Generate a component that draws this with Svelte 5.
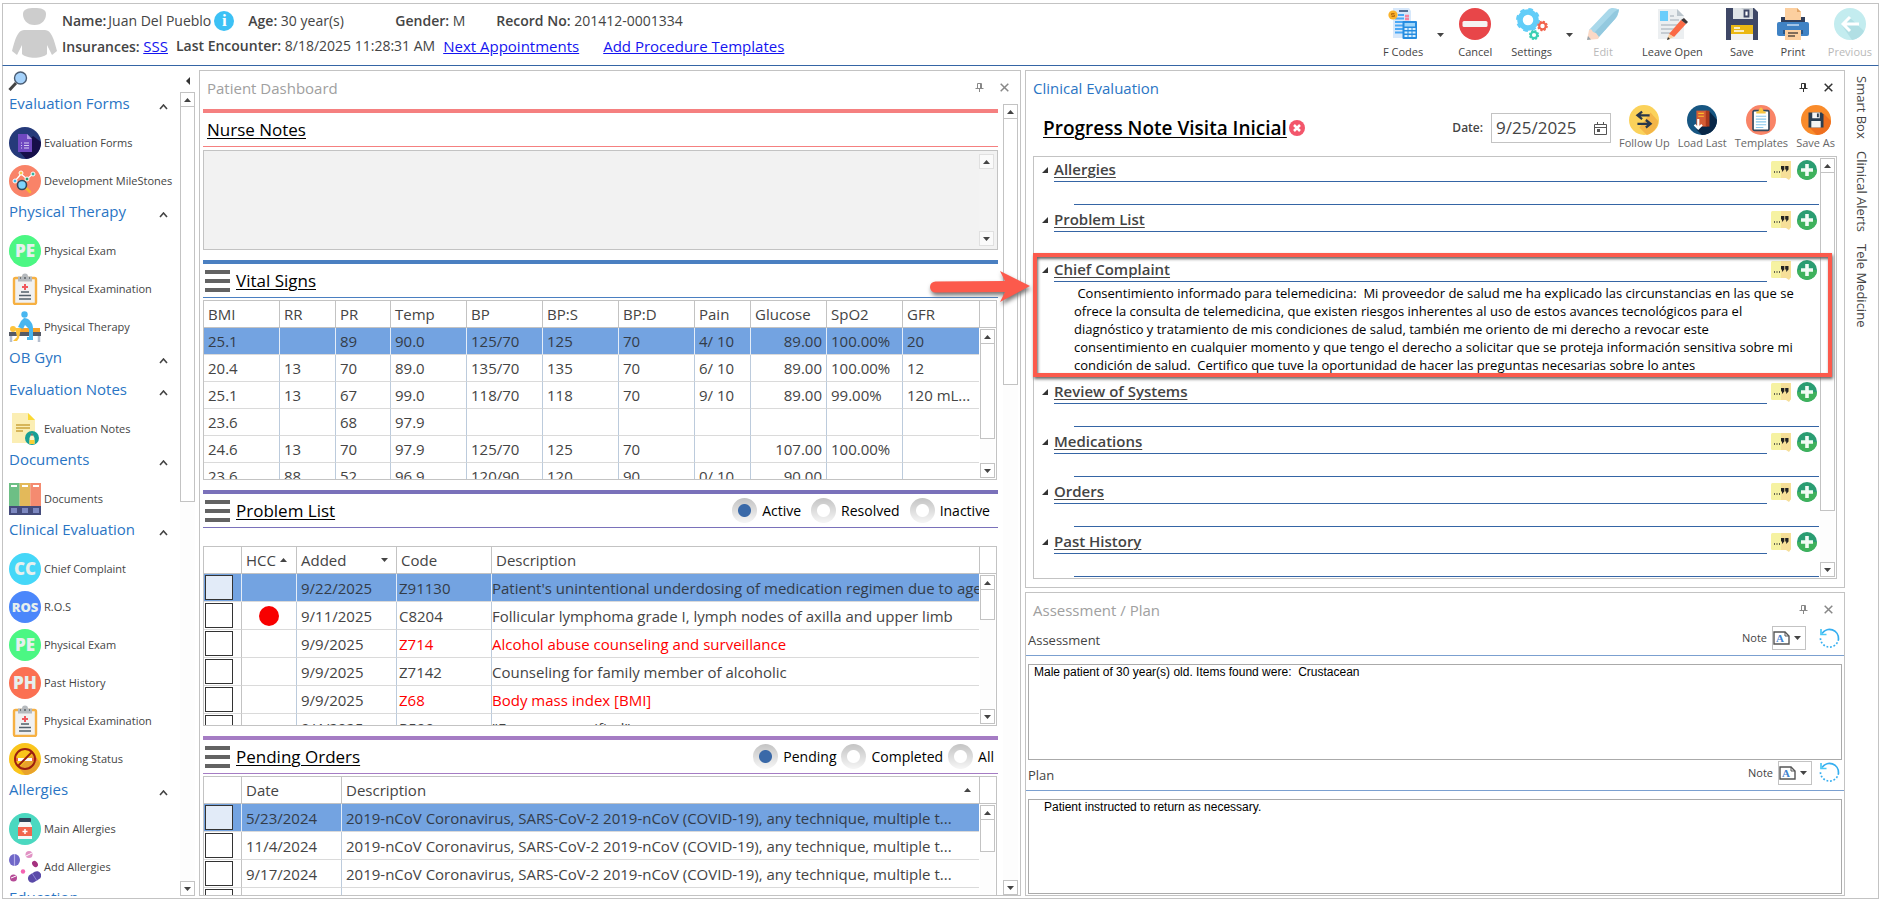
<script lang="ts">
	type Column = { label: string; width?: number; sort?: 'asc' | 'desc'; align?: 'right' };

	const groups = [
		{
			title: 'Evaluation Forms',
			items: [
				{ label: 'Evaluation Forms', icon: 'form' },
				{ label: 'Development MileStones', icon: 'milestones' }
			]
		},
		{
			title: 'Physical Therapy',
			items: [
				{ label: 'Physical Exam', icon: 'badge', text: 'PE', color: '#4bf783' },
				{ label: 'Physical Examination', icon: 'clipboard' },
				{ label: 'Physical Therapy', icon: 'therapy' }
			]
		},
		{ title: 'OB Gyn', items: [] },
		{ title: 'Evaluation Notes', items: [{ label: 'Evaluation Notes', icon: 'notes' }] },
		{ title: 'Documents', items: [{ label: 'Documents', icon: 'binders' }] },
		{
			title: 'Clinical Evaluation',
			items: [
				{ label: 'Chief Complaint', icon: 'badge', text: 'CC', color: '#45d7f8' },
				{ label: 'R.O.S', icon: 'badge', text: 'ROS', color: '#4b87fb' },
				{ label: 'Physical Exam', icon: 'badge', text: 'PE', color: '#4bf783' },
				{ label: 'Past History', icon: 'badge', text: 'PH', color: '#fb7052' },
				{ label: 'Physical Examination', icon: 'clipboard' },
				{ label: 'Smoking Status', icon: 'smoking' }
			]
		},
		{
			title: 'Allergies',
			items: [
				{ label: 'Main Allergies', icon: 'bottle' },
				{ label: 'Add Allergies', icon: 'pills' }
			]
		},
		{ title: 'Education', items: [] }
	];

	const toolbar = [
		{ label: 'F Codes', icon: 'fcodes', menu: true },
		{ label: 'Cancel', icon: 'cancel' },
		{ label: 'Settings', icon: 'settings', menu: true },
		{ label: 'Edit', icon: 'edit', disabled: true },
		{ label: 'Leave Open', icon: 'leave', wide: true },
		{ label: 'Save', icon: 'save' },
		{ label: 'Print', icon: 'print' },
		{ label: 'Previous', icon: 'previous', disabled: true }
	];

	const vitalColumns: Column[] = [
		{ label: 'BMI', width: 76 },
		{ label: 'RR', width: 56 },
		{ label: 'PR', width: 55 },
		{ label: 'Temp', width: 76 },
		{ label: 'BP', width: 76 },
		{ label: 'BP:S', width: 76 },
		{ label: 'BP:D', width: 76 },
		{ label: 'Pain', width: 56 },
		{ label: 'Glucose', width: 76, align: 'right' },
		{ label: 'SpO2', width: 76 },
		{ label: 'GFR' }
	];

	const vitals = [
		['25.1', '', '89', '90.0', '125/70', '125', '70', '4/ 10', '89.00', '100.00%', '20'],
		['20.4', '13', '70', '89.0', '135/70', '135', '70', '6/ 10', '89.00', '100.00%', '12'],
		['25.1', '13', '67', '99.0', '118/70', '118', '70', '9/ 10', '89.00', '99.00%', '120 mL...'],
		['23.6', '', '68', '97.9', '', '', '', '', '', '', ''],
		['24.6', '13', '70', '97.9', '125/70', '125', '70', '', '107.00', '100.00%', ''],
		['23.6', '88', '52', '96.9', '120/90', '120', '90', '0/ 10', '90.00', '', '']
	];

	const problems = [
		{ added: '9/22/2025', code: 'Z91130', text: "Patient's unintentional underdosing of medication regimen due to age-related debility" },
		{ added: '9/11/2025', code: 'C8204', text: 'Follicular lymphoma grade I, lymph nodes of axilla and upper limb', hcc: true },
		{ added: '9/9/2025', code: 'Z714', text: 'Alcohol abuse counseling and surveillance', alert: true },
		{ added: '9/9/2025', code: 'Z7142', text: 'Counseling for family member of alcoholic' },
		{ added: '9/9/2025', code: 'Z68', text: 'Body mass index [BMI]', alert: true },
		{ added: '9/4/2025', code: 'R509', text: '"Fever, unspecified"' }
	];

	const covidTest = '2019-nCoV Coronavirus, SARS-CoV-2 2019-nCoV (COVID-19), any technique, multiple t...';
	const orders = [
		{ date: '5/23/2024', text: covidTest },
		{ date: '11/4/2024', text: covidTest },
		{ date: '9/17/2024', text: covidTest },
		{ date: '', text: '' }
	];

	const complaint = [
		' Consentimiento informado para telemedicina:  Mi proveedor de salud me ha explicado las circunstancias en las que se',
		'ofrece la consulta de telemedicina, que existen riesgos inherentes al uso de estos avances tecnológicos para el',
		'diagnóstico y tratamiento de mis condiciones de salud, también me oriento de mi derecho a revocar este',
		'consentimiento en cualquier momento y que tengo el derecho a solicitar que se proteja información sensitiva sobre mi',
		'condición de salud.  Certifico que tuve la oportunidad de hacer las preguntas necesarias sobre lo antes'
	].join('\n');

	const sections = [
		{ title: 'Allergies' },
		{ title: 'Problem List' },
		{ title: 'Chief Complaint', body: complaint, highlight: true },
		{ title: 'Review of Systems' },
		{ title: 'Medications' },
		{ title: 'Orders' },
		{ title: 'Past History' }
	];

	const noteTools = [
		{ label: 'Follow Up', icon: 'followup' },
		{ label: 'Load Last', icon: 'loadlast' },
		{ label: 'Templates', icon: 'templates' },
		{ label: 'Save As', icon: 'saveas' }
	];

	let problemFilter = $state('Active');
	let orderFilter = $state('Pending');
	let visitDate = $state('9/25/2025');
	let assessment = $state('Male patient of 30 year(s) old. Items found were:  Crustacean');
	let plan = $state('   Patient instructed to return as necessary.');
	let nurseNotes = $state('');
</script>

{#snippet icon(name: string, text = '', color = '')}
	<svg class="icon" viewBox="0 0 32 32" aria-hidden="true">
		{#if name === 'badge'}
			<circle cx="16" cy="16" r="16" fill={color} />
			<text class="badge-text" x="16" y={text.length > 2 ? 21 : 22} font-size={text.length > 2 ? 13 : 17}>{text}</text>
		{:else if name === 'form'}
			<circle cx="16" cy="16" r="16" fill="#253a7a" />
			<path d="M10 24 17 32C26 31 32 24 32 15L24 9Z" fill="#160f4a" />
			<path d="M9 7h9l5 5v13H9z" fill="#6f48c0" />
			<path d="M18 7v5h5z" fill="#b59ae6" />
			<path d="M12 16h1m2 0h5m-8 2.500h1m2 0h5m-8 2.500h1m2 0h5" stroke="#d9cdf3" stroke-width="1.200" />
		{:else if name === 'milestones'}
			<circle cx="16" cy="16" r="16" fill="#f98368" />
			<path d="m6 16 6-7 6 5 6-5" fill="none" stroke="#fff" stroke-width="1.300" />
			<circle cx="6" cy="16" r="2" fill="#3fb8e8" stroke="#fff" />
			<circle cx="12" cy="8" r="2" fill="#f7c948" stroke="#fff" />
			<circle cx="18" cy="14" r="2" fill="#2a9d6f" stroke="#fff" />
			<circle cx="24" cy="9" r="2" fill="#36b3a0" stroke="#fff" />
			<path d="m17 23 4 4" stroke="#f7b733" stroke-width="2.600" stroke-linecap="round" />
			<circle cx="13" cy="20" r="4.500" fill="#7ed3fb" stroke="#2f4a5e" stroke-width="1.600" />
		{:else if name === 'clipboard'}
			<rect x="5" y="5" width="22" height="26" rx="1.500" fill="#f1f1f1" stroke="#f6b042" stroke-width="2.400" />
			<path d="M9 3.500h4a3 3 0 0 1 6 0h4v5H9z" fill="#b6babe" />
			<path d="M11 5h1m3 0h2m3 0h1" stroke="#5c6166" stroke-width="1.500" />
			<path d="M16 11v6m-3-3h6" stroke="#f0585e" stroke-width="2" />
			<path d="M12 19h8m-10 3.500h12m-12 3.500h12" stroke="#53616b" stroke-width="1.500" />
		{:else if name === 'therapy'}
			<path d="M2 24v7m28-7v7" stroke="#b5bfd0" stroke-width="2.500" />
			<rect x="0" y="21" width="32" height="4" fill="#555a66" />
			<path d="M8 17h23v4H8z" fill="#f9a32a" />
			<circle cx="4" cy="18" r="3" fill="#fdc33b" />
			<path d="M6 17h6l-2 10-2 3H4l4-4z" fill="#fdc33b" />
			<circle cx="15.500" cy="3.500" r="3.200" fill="#48b6f0" />
			<path d="M15 7c5 0 9 5 9 10v12h-6v-3h2v-8l-4-4-2 4-5-2 3-6z" fill="#48b6f0" />
		{:else if name === 'notes'}
			<path d="M3 0h16l7 7v23H3z" fill="#fbeeb4" />
			<path d="M19 0v7h7z" fill="#fbd935" />
			<path d="M7 12h14M7 15h14M7 18h7" stroke="#cba43c" stroke-width="1.300" />
			<circle cx="23" cy="25" r="7" fill="#17a095" />
			<path d="m23 20-2.500 5v6h5v-6z" fill="#fff3c8" />
			<path d="M20.500 27h5v4h-5z" fill="#f8cf36" />
			<path d="m23 20-1 2.500h2z" fill="#334" />
		{:else if name === 'binders'}
			<path d="M0 0h10.700v23H0z" fill="#6dbf85" />
			<path d="M10.700 0h10.700v23H10.700z" fill="#e3b95a" />
			<path d="M21.300 0H32v23H21.300z" fill="#f48b70" />
			<path d="M2 3h6m5 0h6m5 0h6" stroke="#fff" stroke-width="2" />
			<path d="M0 23h32v9H0z" fill="#454c7c" />
			<path d="M2 25h6v5H2zm11 0h6v5h-6zm11 0h6v5h-6z" fill="#7d88c0" />
		{:else if name === 'smoking'}
			<circle cx="16" cy="16" r="16" fill="#fac51c" />
			<path d="m25 10 6 10c-2 7-8 12-15 12l-6-7z" fill="#e8a22c" />
			<path d="M5 15h22v3H5z" fill="#fff" />
			<path d="M5 15h4v3H5zm18 0h5v3h-5z" fill="#f26a3c" />
			<circle cx="16" cy="16" r="10" fill="none" stroke="#9c1f10" stroke-width="2" />
			<path d="m9 23 14-14" stroke="#9c1f10" stroke-width="2" />
		{:else if name === 'bottle'}
			<circle cx="16" cy="16" r="16" fill="#4bd8c0" />
			<rect x="10" y="5" width="12" height="4" rx="1" fill="#31445a" />
			<path d="M11 9h10l2 4v13H9V13z" fill="#f7f7f7" />
			<path d="M9 14h14v9H9z" fill="#f2654e" />
			<path d="M16 16v5m-2.500-2.500h5" stroke="#fff" stroke-width="1.500" />
		{:else if name === 'pills'}
			<ellipse cx="5.500" cy="9" rx="5.500" ry="6" fill="#6f67c8" />
			<path d="M5.500 3v12" stroke="#b5b0ea" stroke-width="1.200" />
			<circle cx="20" cy="3.500" r="3.500" fill="#e192c4" />
			<path d="m17 5 6-3" stroke="#fff" />
			<ellipse cx="26" cy="13" rx="2.600" ry="3.400" fill="#a5317f" transform="rotate(-35 26 13)" />
			<circle cx="14" cy="20.500" r="2.200" fill="#f462b2" />
			<circle cx="4.500" cy="27" r="3.500" fill="#b54a97" />
			<path d="m2 27 5-2" stroke="#fff" />
			<rect x="18.500" y="22" width="14" height="8.500" rx="4.200" fill="#5a4aa8" transform="rotate(-32 25 26)" />
			<path d="m23 22 5 8" stroke="#8f84d8" />
		{:else if name === 'fcodes'}
			<path d="M6 0h16l2 3v27H6z" fill="#d7e8fb" />
			<path d="M12 3h9" stroke="#35527e" stroke-width="1.600" />
			<path d="M11 7h6m-9 3.500h9m-9 3.500h9m-9 3.500h8m-8 3.500h8m-8 3.500h8" stroke="#4aa8f6" stroke-width="1.800" />
			<path d="M18 8h4m-4 3h4" stroke="#f7839f" stroke-width="2.600" />
			<circle cx="6" cy="7" r="4.600" fill="#f9b32c" />
			<path d="M7.500 5.500h-3V7h3v1.500h-3" fill="none" stroke="#b96d0a" />
			<rect x="15.500" y="13" width="14.500" height="18" rx="1" fill="#258ce0" />
			<path d="M17.500 15h10.500v3.500H17.500z" fill="#9ed6fb" />
			<path d="M17.500 21h3m1 0h3m1 0h3m-11 3.500h3m1 0h3m1 0h3m-11 3.500h3m1 0h3m1 0h3" stroke="#d9effe" stroke-width="2.200" />
		{:else if name === 'cancel'}
			<circle cx="16" cy="16" r="16" fill="#e84649" />
			<rect x="3.500" y="13" width="25" height="6" rx="1.500" fill="#f5f4f2" />
		{:else if name === 'settings'}
			<circle cx="12" cy="12" r="8" fill="none" stroke="#62cdf8" stroke-width="5.500" />
			<circle cx="12" cy="12" r="10.500" fill="none" stroke="#62cdf8" stroke-width="3" stroke-dasharray="4.500 3.750" />
			<circle cx="26.500" cy="18" r="3.300" fill="none" stroke="#f2634c" stroke-width="2.200" />
			<circle cx="26.500" cy="18" r="4.600" fill="none" stroke="#f2634c" stroke-width="1.400" stroke-dasharray="2 1.600" />
			<circle cx="18" cy="27" r="3.200" fill="none" stroke="#3bd0b4" stroke-width="2.200" />
			<circle cx="18" cy="27" r="4.400" fill="none" stroke="#3bd0b4" stroke-width="1.400" stroke-dasharray="2 1.450" />
		{:else if name === 'edit'}
			<path d="m2 22 19-20c3-3 8-2 11 0-1 4-1 6-4 9L11 30z" fill="#a9d8ea" />
			<path d="m6 26 21-22 5-3c-1 5-2 7-4 10L11 30z" fill="#93c9df" />
			<path d="m2 22 2-1 2 3 3 1 3 4-1 2-11 1z" fill="#fbd9c6" />
			<path d="m1 28-1 4 4-.5z" fill="#9aa7af" />
		{:else if name === 'leave'}
			<path d="M2 1h19l7 7v23H2z" fill="#eceff1" />
			<path d="M21 1v7h7z" fill="#bcc6cd" />
			<path d="M4 3h8v10H4z" fill="#6bcdfb" />
			<path d="M14 8h4m-4 4h9M5 17h18M5 21h16M5 25h10" stroke="#b8c1c8" stroke-width="1.500" />
			<path d="m13 26 12-14 5 4-12 13z" fill="#fb6a45" />
			<path d="m25 12 3-2 4 4-2 2z" fill="#3a3537" />
			<path d="m13 26-2 6 7-3z" fill="#fbcf9e" />
			<path d="m11 32 1-3 2 2z" fill="#333" />
		{:else if name === 'save'}
			<path d="M0 0h28l4 4v28H0z" fill="#3e4766" />
			<path d="M7 0h20v11H7z" fill="#e0e4e7" />
			<path d="M15 0h12v11z" fill="#cbd0d4" />
			<path d="M18.500 2.500h4v6h-4z" fill="#fff" stroke="#3e4766" stroke-width="1.800" />
			<path d="M5 17h22v15H5z" fill="#f2f2f2" />
			<path d="M5 17h22v9H5z" fill="#ebb813" />
			<path d="M8 20h6m-6 3h10" stroke="#fff" stroke-width="1.300" />
		{:else if name === 'print'}
			<path d="M8 0h12l4 4v10H8z" fill="#fccf9f" />
			<path d="M20 0v4h4z" fill="#e2a567" />
			<path d="M4 9h24v8H4z" fill="#303f5c" />
			<path d="M8 4h16v8H8z" fill="#fccf9f" />
			<rect x="0" y="14" width="32" height="14" rx="2" fill="#3f82c4" />
			<path d="M10 17h12" stroke="#cfe3f7" stroke-width="1.400" />
			<path d="M6 22h20v4H6z" fill="#2c5788" />
			<path d="M8 22h16v10H8z" fill="#fccf9f" />
			<path d="M11 25h10m-10 3h7" stroke="#584c43" stroke-width="1.300" />
		{:else if name === 'previous'}
			<circle cx="16" cy="16" r="16" fill="#c3ecef" />
			<path d="M15 9 30 23a16 16 0 0 1-12 9L7 16z" fill="#b1dfe4" />
			<path d="M25 16H9m7-7-7 7 7 7" fill="none" stroke="#fff" stroke-width="3" />
		{:else if name === 'followup'}
			<circle cx="16" cy="16" r="16" fill="#fbd25b" />
			<path d="m23 8 8 9c0 6-5 13-12 15l-8-8z" fill="#f3b548" />
			<path d="M22 11H9m5-4-5 4 5 4M9 20h14m-5-4 5 4-5 4" fill="none" stroke="#28364b" stroke-width="2.400" />
		{:else if name === 'loadlast'}
			<circle cx="16" cy="16" r="16" fill="#175682" />
			<path d="m24 7 8 9c0 9-7 16-16 16l-6-6z" fill="#082747" />
			<path d="M10 6h11v17H10z" fill="#d65d35" />
			<path d="M20 6h4v17h-4z" fill="#a9391c" />
			<path d="M12 9h6m-6 3h6" stroke="#f9c02b" stroke-width="1.300" />
			<path d="M12 15v9m-4-3 4 4 4-4" fill="none" stroke="#fff" stroke-width="2.300" />
		{:else if name === 'templates'}
			<circle cx="16" cy="16" r="16" fill="#f98467" />
			<rect x="7.500" y="6" width="17" height="21" rx="1.500" fill="#fff" stroke="#34495e" stroke-width="1.800" />
			<path d="M11 7h2l2-4h2l2 4h2v2H11z" fill="#f7c540" />
			<path d="M10.500 12h11m-11 3h11m-11 3h11m-11 3h11m-11 3h8" stroke="#89c7eb" stroke-width="1.200" />
		{:else if name === 'saveas'}
			<circle cx="16" cy="16" r="16" fill="#f98b2b" />
			<path d="m24 9 8 8c0 8-7 15-15 15l-8-8z" fill="#ee6f1f" />
			<path d="M8 8h14l2 2v14H8z" fill="#2b3e51" />
			<path d="M12 8h8v6h-8zm-1 9h10v7H11z" fill="#f4f4f4" />
			<path d="M17 9h2v4h-2z" fill="#2b3e51" />
		{/if}
	</svg>
{/snippet}

{#snippet tri(dir: 'up' | 'down')}
	<svg class="tri" viewBox="0 0 7 4" aria-hidden="true">
		<path d={dir === 'up' ? 'M0 4h7L3.500 0z' : 'M0 0h7L3.500 4z'} fill="#444" />
	</svg>
{/snippet}

{#snippet scrollbar(thumb: number)}
	<div class="scrollbar">
		<button class="scroll-arrow" aria-label="Scroll up">{@render tri('up')}</button>
		<div class="track">
			{#if thumb > 0}<div class="thumb" style="height: {thumb}%"></div>{/if}
		</div>
		<button class="scroll-arrow" aria-label="Scroll down">{@render tri('down')}</button>
	</div>
{/snippet}

{#snippet panelHead(title: string, active: boolean)}
	<header class="panel-head" class:active>
		<h2>{title}</h2>
		<button class="panel-btn" aria-label="Pin {title}">
			<svg viewBox="0 0 9 9"><path d="M2.500.5h4v5h-4zM.5 5.500h8M4.500 5.500V9M5.500 1v4" fill="none" stroke="currentColor" /></svg>
		</button>
		<button class="panel-btn" aria-label="Close {title}">
			<svg viewBox="0 0 9 9"><path d="m.7.7 7.600 7.600m0-7.600L.7 8.300" stroke="currentColor" stroke-width="1.500" /></svg>
		</button>
	</header>
{/snippet}

{#snippet menuIcon()}
	<svg class="menu-icon" viewBox="0 0 25 22" aria-hidden="true">
		<path d="M0 2h25M0 11h25M0 20h25" stroke="#636363" stroke-width="4" />
	</svg>
{/snippet}

{#snippet tableHead(columns: Column[])}
	<colgroup>
		{#each columns as col}
			<col style={col.width ? `width: ${col.width}px` : ''} />
		{/each}
	</colgroup>
	<thead>
		<tr>
			{#each columns as col}
				<th scope="col" class:spread={col.sort && col.label !== 'HCC'}>
					{#if col.sort}
						<span class="sortable">{col.label}{@render tri(col.sort === 'asc' ? 'up' : 'down')}</span>
					{:else}
						{col.label}
					{/if}
				</th>
			{/each}
		</tr>
	</thead>
{/snippet}

{#snippet noteHead(id: string, title: string)}
	<div class="note-head {id}">
		<label class="note-title" for={id}>{title}</label>
		<span class="note-label" id="{id}-note">Note</span>
		<button class="note-menu" aria-labelledby="{id}-note">
			<svg viewBox="0 0 17 14" aria-hidden="true">
				<path d="M1 1h11l4 4v8H1z" fill="#fff" stroke="#555" stroke-width="1.400" />
				<path d="M12 1v4h4" fill="none" stroke="#555" />
				<text class="note-letter" x="7" y="11">A</text>
			</svg>
			{@render tri('down')}
		</button>
		<button class="reload" aria-label="Reload {title}">
			<svg viewBox="0 0 21 21" aria-hidden="true">
				<path d="M3 5.500A9 9 0 0 1 19.500 11" fill="none" stroke="#35aef0" stroke-width="1.700" />
				<path d="M2 1v5.500h5.500" fill="none" stroke="#4cc9f5" stroke-width="1.700" />
				<path d="M19.500 11A9 9 0 1 1 1.500 9" fill="none" stroke="#35aef0" stroke-width="1.700" stroke-dasharray="1.800 1.800" />
			</svg>
		</button>
	</div>
{/snippet}

<div class="frame">
	<header class="topbar">
		<svg class="avatar" viewBox="0 0 45 50" aria-hidden="true">
			<path d="M11 6C11 1 16 0 22.500 0S34 1 34 6c0 6-4 11-11.500 11S11 12 11 6z" fill="#cdcdcd" />
			<path d="M12 22h21c6 0 9 9 12 21l-5 4-5-10v9c-5 5-20 5-25 0v-9L5 47l-5-4c3-12 6-21 12-21z" fill="#cdcdcd" />
		</svg>
		<div class="patient">
			<div class="patient-row">
				<span class="field name"><b>Name:</b>Juan Del Pueblo</span>
				<button class="info" aria-label="Patient details">i</button>
				<span class="field age"><b>Age:</b> 30 year(s)</span>
				<span class="field gender"><b>Gender:</b> M</span>
				<span class="field"><b>Record No:</b> 201412-0001334</span>
			</div>
			<div class="patient-row second">
				<span class="field"><b>Insurances:</b> <a href="#insurances">SSS</a></span>
				<span class="field"><b>Last Encounter:</b> 8/18/2025 11:28:31 AM</span>
				<a href="#appointments">Next Appointments</a>
				<a class="templates-link" href="#templates">Add Procedure Templates</a>
			</div>
		</div>
		<nav class="toolbar" aria-label="Actions">
			{#each toolbar as tool}
				<button class="tool" class:wide={tool.wide} disabled={tool.disabled}>
					{@render icon(tool.icon)}
					<span>{tool.label}</span>
				</button>
				{#if tool.menu}
					<button class="tool-menu" aria-label="{tool.label} options">{@render tri('down')}</button>
				{/if}
			{/each}
		</nav>
	</header>

	<main>
		<aside class="sidebar">
			<div class="side-top">
				<button class="search" aria-label="Search">
					<svg viewBox="0 0 20 20" aria-hidden="true">
						<path d="m8 12-6.500 7" stroke="#444" stroke-width="3" />
						<circle cx="12.500" cy="7" r="6" fill="#a5d2fb" stroke="#4a5c72" stroke-width="1.400" />
					</svg>
				</button>
				<button class="collapse" aria-label="Collapse menu">
					<svg viewBox="0 0 4 8"><path d="M4 0v8L0 4z" fill="#333" /></svg>
				</button>
			</div>
			<div class="side-body">
				<nav class="side-list" aria-label="Forms">
					{#each groups as group}
						<button class="group-head">
							{group.title}
							<svg class="chevron" viewBox="0 0 9 6" aria-hidden="true"><path d="m1 5 3.500-4L8 5" fill="none" stroke="#444" stroke-width="1.600" /></svg>
						</button>
						{#each group.items as item}
							<button class="side-item">
								{@render icon(item.icon, item.text, item.color)}
								{item.label}
							</button>
						{/each}
					{/each}
				</nav>
				{@render scrollbar(51)}
			</div>
		</aside>

		<section class="panel dashboard">
			{@render panelHead('Patient Dashboard', false)}
			<div class="dash-body">
				<div class="dash-content">
					<section class="block nurse">
						<div class="block-head"><h3><label for="nurse-notes">Nurse Notes</label></h3></div>
						<div class="nurse-box">
							<textarea id="nurse-notes" bind:value={nurseNotes}></textarea>
							{@render scrollbar(0)}
						</div>
					</section>

					<section class="block vital">
						<div class="block-head">{@render menuIcon()}<h3>Vital Signs</h3></div>
						<div class="grid-box">
							<div class="table-wrap">
								<table class="vital-table">
									{@render tableHead(vitalColumns)}
									<tbody>
										{#each vitals as row, r}
											<tr class:selected={r === 0}>
												{#each row as value, c}
													<td class:right={vitalColumns[c].align === 'right'}>{value}</td>
												{/each}
											</tr>
										{/each}
									</tbody>
								</table>
							</div>
							<div class="grid-side">{@render scrollbar(80)}</div>
						</div>
					</section>

					<section class="block problem">
						<div class="block-head">
							{@render menuIcon()}
							<h3>Problem List</h3>
							<div class="radios">
								{#each ['Active', 'Resolved', 'Inactive'] as option}
									<label><input type="radio" name="problem-filter" value={option} bind:group={problemFilter} />{option}</label>
								{/each}
							</div>
						</div>
						<div class="grid-box">
							<div class="table-wrap">
								<table>
									{@render tableHead([
										{ label: '', width: 38 },
										{ label: 'HCC', width: 55, sort: 'asc' },
										{ label: 'Added', width: 100, sort: 'desc' },
										{ label: 'Code', width: 95 },
										{ label: 'Description' }
									])}
									<tbody>
										{#each problems as row, r}
											<tr class:selected={r === 0} class:alert={row.alert}>
												<td class="check"><input type="checkbox" aria-label="Select {row.code}" /></td>
												<td class="hcc">{#if row.hcc}<span class="hcc-dot"></span>{/if}</td>
												<td>{row.added}</td>
												<td class="code">{row.code}</td>
												<td class="desc">{row.text}</td>
											</tr>
										{/each}
									</tbody>
								</table>
							</div>
							<div class="grid-side">{@render scrollbar(25)}</div>
						</div>
					</section>

					<section class="block orders">
						<div class="block-head">
							{@render menuIcon()}
							<h3>Pending Orders</h3>
							<div class="radios">
								{#each ['Pending', 'Completed', 'All'] as option}
									<label><input type="radio" name="order-filter" value={option} bind:group={orderFilter} />{option}</label>
								{/each}
							</div>
						</div>
						<div class="grid-box">
							<div class="table-wrap">
								<table>
									{@render tableHead([
										{ label: '', width: 38 },
										{ label: 'Date', width: 100 },
										{ label: 'Description', sort: 'asc' }
									])}
									<tbody>
										{#each orders as row, r}
											<tr class:selected={r === 0}>
												<td class="check"><input type="checkbox" aria-label="Select order {r + 1}" /></td>
												<td>{row.date}</td>
												<td>{row.text}</td>
											</tr>
										{/each}
									</tbody>
								</table>
							</div>
							<div class="grid-side">{@render scrollbar(27)}</div>
						</div>
					</section>
				</div>
				{@render scrollbar(35)}
			</div>
		</section>

		<div class="right-col">
			<section class="panel clinical">
				{@render panelHead('Clinical Evaluation', true)}
				<div class="note-bar">
					<h3 class="note-name">Progress Note Visita Inicial</h3>
					<button class="remove" aria-label="Remove note">
						<svg viewBox="0 0 16 16"><circle cx="8" cy="8" r="8" fill="#f3566b" /><path d="m5 5 6 6m0-6-6 6" stroke="#fff" stroke-width="2.500" /></svg>
					</button>
					<label class="date-label" for="visit-date">Date:</label>
					<div class="date-box">
						<input id="visit-date" type="text" bind:value={visitDate} />
						<button class="calendar" aria-label="Choose date">
							<svg viewBox="0 0 13 13"><path d="M.5 2.500h12v10H.5zM.5 5.500h12M3.500 0v3M9.500 0v3" fill="none" stroke="#555" /><path d="M3 7h3v3H3z" fill="#555" /></svg>
						</button>
					</div>
					{#each noteTools as tool}
						<button class="note-tool">
							{@render icon(tool.icon)}
							<span>{tool.label}</span>
						</button>
					{/each}
				</div>
				<div class="eval-box">
					<div class="eval-list">
						{#each sections as section}
							<article class="eval-section">
								<div class="eval-head">
									<svg class="expander" viewBox="0 0 6 6" aria-hidden="true"><path d="M6 0v6H0z" fill="#333" /></svg>
									<h4>{section.title}</h4>
									<button class="quote" aria-label="Comment on {section.title}">
										<svg viewBox="0 0 20 20">
											<rect width="20" height="17" y="1" rx="1.500" fill="#f6f2a2" />
											<path d="M10 1h10v16l-2 3-3-2h-5z" fill="#f6df98" />
											<path d="M3 12h1m1.500 0h1m1.500 0h1" stroke="#333" stroke-width="1.300" />
											<path d="M10 6h3.300v3.500L11 12v-2.500h-1zm4.200 0h3.300v3.500L15.200 12v-2.500h-1z" fill="#222" />
										</svg>
									</button>
									<button class="add" aria-label="Add to {section.title}">
										<svg viewBox="0 0 20 20">
											<circle cx="10" cy="10" r="10" fill="#2a9d72" />
											<path d="M0 10a10 10 0 0 0 20 0z" fill="#3fb25c" />
											<path d="M10 4v12M4 10h12" stroke="#f2fbf5" stroke-width="3.600" />
										</svg>
									</button>
								</div>
								<div class="eval-body">{section.body ?? ''}</div>
								{#if section.highlight}
									<div class="highlight">
										<svg class="pointer" viewBox="0 0 100 32" aria-hidden="true">
											<path d="M5.500 10.500 75 10 70 0l30 15-30 16 5-10-69.500.5a5.500 5.500 0 0 1 0-11z" fill="#fc5a4c" />
										</svg>
									</div>
								{/if}
							</article>
						{/each}
					</div>
					{@render scrollbar(87)}
				</div>
			</section>

			<section class="panel plan-panel">
				{@render panelHead('Assessment / Plan', false)}
				{@render noteHead('assessment', 'Assessment')}
				<textarea class="note-text" id="assessment" bind:value={assessment}></textarea>
				{@render noteHead('plan', 'Plan')}
				<textarea class="note-text" id="plan" bind:value={plan}></textarea>
			</section>
		</div>

		<nav class="side-tabs" aria-label="Side panels">
			<button>Smart Box</button>
			<button>Clinical Alerts</button>
			<button>Tele Medicine</button>
		</nav>
	</main>
</div>

<style>
	:global(body) {
		background: #fff;
	}

	.frame {
		--line: #c3c3c3;
		--blue: #2a75c4;
		--rule: #3565a5;
		--text: #444;
		height: 100vh;
		box-sizing: border-box;
		padding: 3px 1px 3px 2px;
		display: flex;
		flex-direction: column;
		font-family: 'Open Sans', 'Noto Sans', sans-serif;
		font-size: 15px;
		line-height: 20px;
		color: var(--text);
		overflow: hidden;
	}

	h2,
	h3,
	h4 {
		margin: 0;
		font-weight: 400;
	}

	button {
		margin: 0;
		padding: 0;
		border: 0;
		background: none;
		font: inherit;
		color: inherit;
		flex-shrink: 0;
	}

	svg {
		display: block;
		flex-shrink: 0;
	}

	a {
		color: #1414f0;
		font-size: 15px;
	}

	textarea {
		box-sizing: border-box;
		resize: none;
		outline: 0;
		overflow: hidden;
	}

	.icon {
		width: 32px;
		height: 32px;
	}

	.badge-text {
		font-weight: 800;
		text-anchor: middle;
		fill: #e6f0ee;
	}

	.tri {
		width: 7px;
		height: 4px;
	}

	/* top bar */
	.topbar {
		height: 61px;
		display: flex;
		align-items: flex-start;
		border: 1px solid var(--line);
		border-bottom-color: var(--rule);
	}

	.avatar {
		width: 45px;
		height: 50px;
		margin: 4px 5px 0 9px;
	}

	.patient {
		padding-top: 6px;
		font-size: 14px;
		white-space: nowrap;
	}

	.patient-row {
		display: flex;
		align-items: center;
		height: 22px;
	}

	.second {
		height: 28px;
		gap: 8px;
	}

	.patient b {
		font-weight: 600;
	}

	.name b {
		margin-right: 2px;
	}

	.info {
		width: 20px;
		height: 20px;
		margin: 0 14px 0 3px;
		border-radius: 50%;
		background: #3cc1f5;
		color: #fff;
		font-family: 'Liberation Serif', serif;
		font-size: 17px;
		font-weight: 700;
		line-height: 20px;
	}

	.age {
		min-width: 147px;
	}

	.gender {
		min-width: 101px;
	}

	.templates-link {
		margin-left: 16px;
	}

	.toolbar {
		margin-left: auto;
		padding: 4px 6px 0 0;
		display: flex;
		gap: 19px;
		font-size: 11px;
		line-height: 16px;
	}

	.tool {
		display: flex;
		flex-direction: column;
		align-items: center;
		gap: 4px;
	}

	.tool:disabled span {
		color: #b9b9b9;
	}

	.wide {
		margin: 0 4px;
	}

	.tool-menu {
		height: 53px;
		margin: 0 -5px;
	}

	/* main */
	main {
		flex: 1;
		min-height: 0;
		padding: 4px 0 2px;
		border: 1px solid var(--line);
		border-top: 0;
		display: flex;
	}

	.panel {
		box-sizing: border-box;
		border: 1px solid var(--line);
		display: flex;
		flex-direction: column;
	}

	.panel-head {
		height: 33px;
		padding: 0 7px;
		display: flex;
		align-items: center;
		gap: 8px;
		color: #888;
		flex-shrink: 0;
	}

	.panel-head h2 {
		flex: 1;
		font-size: 15px;
		color: #a0a0a0;
	}

	.panel-head.active {
		color: #333;
	}

	.panel-head.active h2 {
		color: var(--blue);
	}

	.panel-btn {
		width: 17px;
		height: 17px;
		display: grid;
		place-items: center;
	}

	.panel-btn svg {
		width: 9px;
		height: 9px;
	}

	/* scrollbars */
	.scrollbar {
		width: 15px;
		display: flex;
		flex-direction: column;
		flex-shrink: 0;
	}

	.scroll-arrow {
		box-sizing: border-box;
		height: 15px;
		border: 1px solid var(--line);
		display: grid;
		place-items: center;
	}

	.track {
		flex: 1;
		min-height: 0;
		background: #fdfdfd;
	}

	.thumb {
		box-sizing: border-box;
		border: 1px solid var(--line);
		border-top: 0;
		background: #fff;
	}

	/* sidebar */
	.sidebar {
		width: 196px;
		flex-shrink: 0;
		margin-top: -4px;
		display: flex;
		flex-direction: column;
	}

	.side-top {
		height: 26px;
		padding: 4px 9px 0 5px;
		box-sizing: border-box;
		display: flex;
		justify-content: space-between;
		align-items: center;
	}

	.search svg {
		width: 20px;
		height: 20px;
	}

	.collapse svg {
		width: 4px;
		height: 8px;
	}

	.side-body {
		flex: 1;
		min-height: 0;
		display: flex;
		padding-right: 4px;
	}

	.side-list {
		flex: 1;
		overflow: hidden;
		display: flex;
		flex-direction: column;
		padding-left: 6px;
	}

	.group-head {
		box-sizing: border-box;
		height: 32px;
		padding: 0 12px 10px 0;
		display: flex;
		justify-content: space-between;
		align-items: center;
		color: var(--blue);
		flex-shrink: 0;
	}

	.chevron {
		width: 9px;
		height: 6px;
		margin-top: 8px;
	}

	.side-item {
		height: 38px;
		display: flex;
		align-items: center;
		gap: 3px;
		font-size: 11px;
		white-space: nowrap;
	}

	/* dashboard */
	.dashboard {
		flex: 1;
		min-width: 0;
	}

	.dash-body {
		flex: 1;
		min-height: 0;
		display: flex;
		gap: 5px;
		padding: 0 2px 0 3px;
	}

	.dash-content {
		flex: 1;
		min-width: 0;
		padding-top: 5px;
		overflow: hidden;
	}

	.block {
		--accent: #f58080;
		border-top: 4px solid var(--accent);
		margin-bottom: 10px;
	}

	.vital {
		--accent: #4a7fc1;
	}

	.problem {
		--accent: #7a71ba;
	}

	.orders {
		--accent: #a57cc4;
	}

	.block-head {
		box-sizing: border-box;
		height: 34px;
		padding: 0 4px 0 2px;
		border-bottom: 1px solid var(--accent);
		margin-bottom: 2px;
		display: flex;
		align-items: center;
		gap: 6px;
		color: #000;
	}

	.block-head h3 {
		font-size: 17px;
		line-height: 24px;
		text-decoration: underline;
		text-underline-offset: 2px;
		text-decoration-thickness: 1px;
	}

	.nurse .block-head {
		padding-left: 4px;
		margin-bottom: 3px;
	}

	.problem .block-head {
		padding-right: 8px;
		margin-bottom: 18px;
	}

	.menu-icon {
		width: 25px;
		height: 22px;
	}

	.nurse-box {
		box-sizing: border-box;
		height: 100px;
		padding: 3px;
		border: 1px solid var(--line);
		background: #f2f2f2;
		display: flex;
	}

	.nurse-box textarea {
		flex: 1;
		border: 0;
		background: none;
	}

	.nurse-box .scroll-arrow {
		background: #fafafa;
		border-color: #e0e0e0;
	}

	.nurse-box .track {
		background: #f3f3f3;
	}

	.radios {
		margin-left: auto;
		display: flex;
		gap: 10px;
		font-size: 14px;
	}

	.orders .radios {
		gap: 5px;
	}

	.radios label {
		display: flex;
		align-items: center;
		gap: 5px;
	}

	.radios input {
		appearance: none;
		width: 25px;
		height: 25px;
		margin: 0;
		border-radius: 50%;
		background: radial-gradient(circle, #fff 6px, transparent 7px), linear-gradient(#c4c4c4, #f6f6f6);
	}

	.radios input:checked {
		background: radial-gradient(circle, #3a69a8 6px, transparent 7px), linear-gradient(#c4c4c4, #f6f6f6);
	}

	.grid-box {
		box-sizing: border-box;
		height: 180px;
		margin-right: 1px;
		border: 1px solid var(--line);
		display: flex;
	}

	.table-wrap {
		flex: 1;
		min-width: 0;
		overflow: hidden;
	}

	.grid-side {
		box-sizing: border-box;
		width: 17px;
		padding: 1px;
		display: flex;
		flex-direction: column;
	}

	.grid-side::before {
		content: '';
		height: 26px;
		margin: -1px -1px 1px;
		border-left: 1px solid var(--line);
		border-bottom: 1px solid var(--line);
		flex-shrink: 0;
	}

	.grid-side .scrollbar {
		flex: 1;
		min-height: 0;
	}

	table {
		width: 100%;
		border-collapse: separate;
		border-spacing: 0;
		table-layout: fixed;
	}

	th,
	td {
		box-sizing: border-box;
		height: 28px;
		padding: 0 4px;
		border-right: 1px solid #bccbdc;
		border-bottom: 1px solid #dadada;
		font-weight: 400;
		text-align: left;
		white-space: nowrap;
		overflow: hidden;
	}

	th {
		height: 27px;
		border-color: var(--line);
	}

	th:last-child,
	td:last-child {
		border-right: 0;
	}

	.vital-table td {
		height: 27px;
	}

	.sortable {
		display: flex;
		align-items: center;
		gap: 4px;
	}

	.spread .sortable {
		justify-content: space-between;
		padding-right: 4px;
	}

	.right {
		text-align: right;
	}

	.selected td {
		background: #73a3e1;
		border-right-color: #e4edf8;
		color: #333c48;
	}

	.alert .code,
	.alert .desc {
		color: #f00;
	}

	.check {
		padding: 0 1px;
		border-right-color: var(--line);
	}

	.check input {
		appearance: none;
		display: block;
		box-sizing: border-box;
		width: 28px;
		height: 25px;
		margin: 0;
		border: 1px solid #333;
		background: #fff;
	}

	.selected .check input {
		background: #e2ebf8;
	}

	.code {
		padding: 0 2px;
	}

	.desc {
		padding: 0;
	}

	.hcc-dot {
		display: block;
		width: 20px;
		height: 20px;
		margin: 0 auto;
		border-radius: 50%;
		background: #f80000;
	}

	/* clinical evaluation */
	.right-col {
		flex: 1;
		min-width: 0;
		margin-left: 4px;
		display: flex;
		flex-direction: column;
		gap: 4px;
	}

	.clinical {
		flex: 1;
		padding-bottom: 8px;
	}

	.note-bar {
		height: 52px;
		box-sizing: border-box;
		padding: 0 9px 4px 17px;
		display: flex;
		align-items: center;
		gap: 8px;
	}

	.note-name {
		font-size: 19px;
		font-weight: 600;
		line-height: 24px;
		color: #000;
		text-decoration: underline;
		text-underline-offset: 2px;
		text-decoration-thickness: 1px;
		white-space: nowrap;
	}

	.remove {
		margin-left: -6px;
	}

	.remove svg {
		width: 16px;
		height: 16px;
	}

	.date-label {
		margin-left: auto;
		font-size: 12px;
		font-weight: 600;
	}

	.date-box {
		box-sizing: border-box;
		width: 120px;
		height: 30px;
		padding: 0 3px 0 4px;
		border: 1px solid var(--line);
		display: flex;
		align-items: center;
	}

	.date-box input {
		flex: 1;
		min-width: 0;
		padding: 0;
		border: 0;
		outline: 0;
		background: none;
		font: inherit;
		font-size: 17px;
		color: inherit;
	}

	.calendar svg {
		width: 13px;
		height: 13px;
	}

	.note-tool {
		display: flex;
		flex-direction: column;
		align-items: center;
		font-size: 11px;
		line-height: 16px;
		color: #666;
	}

	.note-tool .icon {
		width: 30px;
		height: 30px;
	}

	.eval-box {
		flex: 1;
		min-height: 0;
		margin: 0 7px;
		border: 1px solid var(--line);
		display: flex;
		gap: 1px;
		padding-right: 1px;
	}

	.eval-box .scrollbar {
		margin: 1px 0;
	}

	.eval-list {
		flex: 1;
		min-width: 0;
		display: flex;
		flex-direction: column;
		gap: 2px;
	}

	.eval-section {
		position: relative;
	}

	.eval-head {
		height: 25px;
		padding: 0 2px 0 8px;
		display: flex;
		align-items: center;
	}

	.expander {
		width: 6px;
		height: 6px;
		margin-right: 6px;
	}

	.eval-head h4 {
		flex: 1;
		box-sizing: border-box;
		height: 25px;
		margin-right: 4px;
		border-bottom: 1px solid var(--rule);
		font-size: 15px;
		font-weight: 600;
		line-height: 25px;
		text-decoration: underline;
		text-underline-offset: 2px;
		text-decoration-thickness: 1px;
	}

	.quote svg,
	.add svg {
		width: 20px;
		height: 20px;
	}

	.quote {
		margin-right: 6px;
	}

	.eval-body {
		box-sizing: border-box;
		min-height: 23px;
		margin-left: 40px;
		padding: 2px 0;
		border-bottom: 1px solid var(--rule);
		font-size: 13px;
		line-height: 18px;
		color: #000;
		white-space: pre;
	}

	.highlight {
		position: absolute;
		z-index: 1;
		inset: -4px -13px 0 -1px;
		border: 4px solid #fc5a4c;
		box-shadow: 1px 2px 3px #666, inset 1px 2px 3px #666;
		pointer-events: none;
	}

	.pointer {
		position: absolute;
		right: calc(100% + 7px);
		top: 14px;
		width: 100px;
		height: 32px;
		filter: drop-shadow(1px 3px 2px #777);
	}

	/* assessment / plan */
	.plan-panel {
		height: 304px;
		padding-bottom: 1px;
	}

	.note-head {
		box-sizing: border-box;
		height: 30px;
		padding: 0 4px 5px 2px;
		border-bottom: 1px solid #7ba0d0;
		display: flex;
		align-items: center;
		flex-shrink: 0;
	}

	.plan {
		margin-top: 1px;
	}

	.note-title {
		flex: 1;
		padding-top: 4px;
		font-size: 13px;
	}

	.note-label {
		font-size: 11px;
		margin-right: 5px;
	}

	.note-menu {
		box-sizing: border-box;
		width: 34px;
		height: 24px;
		margin-right: 13px;
		border: 1px solid var(--line);
		display: flex;
		align-items: center;
		gap: 4px;
	}

	.plan .note-menu {
		margin-right: 7px;
	}

	.note-menu svg:first-child {
		width: 17px;
		height: 14px;
	}

	.note-letter {
		font: 700 11px 'Liberation Serif', serif;
		text-anchor: middle;
		fill: #3f83d1;
	}

	.reload svg {
		width: 21px;
		height: 21px;
	}

	.note-text {
		flex: 1;
		min-height: 0;
		margin: 8px 2px 0;
		padding: 0 5px;
		border: 1px solid #aaa;
		font-family: 'Liberation Sans', Arial, sans-serif;
		font-size: 12px;
		line-height: 14px;
		color: #000;
	}

	/* vertical tabs */
	.side-tabs {
		width: 33px;
		padding-top: 6px;
		display: flex;
		flex-direction: column;
		align-items: center;
		gap: 12px;
		font-size: 13px;
		flex-shrink: 0;
	}

	.side-tabs button {
		writing-mode: vertical-rl;
	}
</style>
